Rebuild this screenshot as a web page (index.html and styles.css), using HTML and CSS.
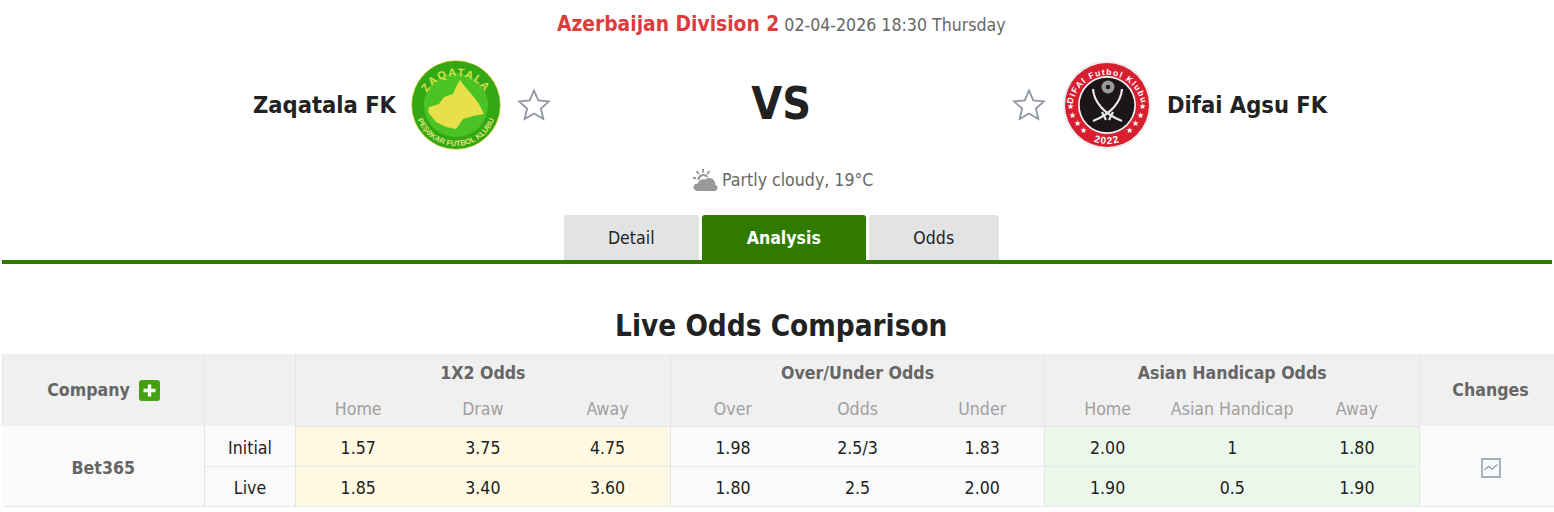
FILE: index.html
```html
<!DOCTYPE html>
<html lang="en">
<head>
    <meta charset="UTF-8">
    <meta name="viewport" content="width=device-width, initial-scale=1.0">
    <title>Zaqatala FK vs Difai Agsu FK</title>
    <link rel="stylesheet" href="styles.css">
</head>
<body>
    <div class="match-info">
        <span class="league">Azerbaijan Division 2</span>
        <span class="match-time">02-04-2026 18:30 Thursday</span>
    </div>

    <div class="teams">
        <div class="team team-home">
            <span class="team-name">Zaqatala FK</span>
            <svg class="logo" width="90" height="90" viewBox="0 0 90 90">
                <defs>
                    <path id="zaqTop" d="M11 50 A34 34 0 1 1 79 50"/>
                    <path id="zaqBottom" d="M4 45 A41 41 0 0 0 86 45"/>
                </defs>
                <circle cx="45" cy="45" r="44.7" fill="#e6d93f"/>
                <circle cx="45" cy="45" r="44" fill="#33a814"/>
                <circle cx="45" cy="45" r="32" fill="#4cc324"/>
                <path d="M49 20 L55 28 L62 36 L68 44 L73 54 L62 56 L52 59 L45 69 L35 67 L25 62 L17 52 L18 47 L28 44 L33 37 L42 34 L45 27 Z" fill="#e8e04a"/>
                <text class="zaq-top"><textPath href="#zaqTop" startOffset="50%" text-anchor="middle">ZAQATALA</textPath></text>
                <text class="zaq-bottom"><textPath href="#zaqBottom" startOffset="50%" text-anchor="middle">PEŞƏKAR FUTBOL KLUBU</textPath></text>
            </svg>
            <svg class="star" width="34" height="34" viewBox="0 0 34 34">
                <path d="M17 2.5 L21.3 12.4 L32 13.4 L23.9 20.5 L26.3 31 L17 25.5 L7.7 31 L10.1 20.5 L2 13.4 L12.7 12.4 Z"/>
            </svg>
        </div>
        <div class="vs">VS</div>
        <div class="team team-away">
            <svg class="star" width="34" height="34" viewBox="0 0 34 34">
                <path d="M17 2.5 L21.3 12.4 L32 13.4 L23.9 20.5 L26.3 31 L17 25.5 L7.7 31 L10.1 20.5 L2 13.4 L12.7 12.4 Z"/>
            </svg>
            <svg class="logo" width="90" height="90" viewBox="0 0 90 90">
                <defs>
                    <path id="difTop" d="M10 50 A35 35 0 1 1 80 50"/>
                    <path id="difBottom" d="M6 45 A39 39 0 0 0 84 45"/>
                </defs>
                <circle cx="45" cy="45" r="44" fill="#ececec"/>
                <circle cx="45" cy="45" r="42" fill="#d81f30"/>
                <circle cx="45" cy="45" r="29" fill="#f4f4f4"/>
                <circle cx="45" cy="45" r="27.3" fill="#1b1718"/>
                <circle cx="46" cy="27" r="6.5" fill="#9a9a9a"/>
                <circle cx="46" cy="27" r="2.2" fill="#1b1718"/>
                <path class="sabre" d="M31 29 C32 42 42 54 60 61"/>
                <path class="sabre" d="M60 29 C59 42 49 54 31 61"/>
                <path class="sabre" d="M51 52 L47 60 M40 52 L44 60"/>
                <text class="dif-top"><textPath href="#difTop" startOffset="50%" text-anchor="middle">DIFAI Futbol Klubu</textPath></text>
                <text class="dif-bottom"><textPath href="#difBottom" startOffset="50%" text-anchor="middle">2022</textPath></text>
                <text class="dif-star" x="5" y="49">★</text>
                <text class="dif-star" x="77" y="49">★</text>
                <text class="dif-star" x="7" y="58">★</text>
                <text class="dif-star" x="75" y="58">★</text>
                <text class="dif-star" x="12" y="66">★</text>
                <text class="dif-star" x="70" y="66">★</text>
                <text class="dif-star" x="18" y="73">★</text>
                <text class="dif-star" x="64" y="73">★</text>
            </svg>
            <span class="team-name">Difai Agsu FK</span>
        </div>
    </div>

    <div class="weather">
        <svg width="26" height="24" viewBox="0 0 26 24">
            <g class="sun-rays">
                <path d="M11 1 V4.5"/>
                <path d="M4.5 3 L6.8 6"/>
                <path d="M17.5 3 L15.2 6"/>
                <path d="M1 10 H4"/>
            </g>
            <path class="sun-arc" d="M6.5 12 A5 5 0 0 1 15.5 9"/>
            <path class="cloud" d="M6 23 C2.5 23 1 20.5 1.5 18.5 C2 16.5 4 15.5 5.5 16 C6.5 12.5 10 10.5 13.5 11.5 C15.5 9.5 20 9.5 22 12.5 C23 14 23.5 15.5 23 16.5 C25 17 26 19 25.5 20.5 C25 22.5 23.5 23 22 23 Z"/>
        </svg>
        <span>Partly cloudy, 19°C</span>
    </div>

    <div class="tabs">
        <a class="tab tab-detail">Detail</a>
        <a class="tab tab-analysis active">Analysis</a>
        <a class="tab tab-odds">Odds</a>
    </div>

    <h2 class="section-title">Live Odds Comparison</h2>

    <table class="odds-table">
        <colgroup>
            <col class="col-company">
            <col class="col-type">
            <col class="col-odd"><col class="col-odd"><col class="col-odd">
            <col class="col-odd"><col class="col-odd"><col class="col-odd">
            <col class="col-odd"><col class="col-odd"><col class="col-odd">
            <col class="col-changes">
        </colgroup>
        <thead>
            <tr class="head-top">
                <th rowspan="2">
                    <span class="company-head">Company
                        <svg width="21" height="21" viewBox="0 0 21 21">
                            <rect width="21" height="21" rx="3" fill="#45a012"/>
                            <path d="M10.5 4.5 V16.5 M4.5 10.5 H16.5" stroke="#fff" stroke-width="3.4"/>
                        </svg>
                    </span>
                </th>
                <th rowspan="2"></th>
                <th colspan="3">1X2 Odds</th>
                <th colspan="3">Over/Under Odds</th>
                <th colspan="3">Asian Handicap Odds</th>
                <th rowspan="2">Changes</th>
            </tr>
            <tr class="head-sub">
                <th>Home</th><th>Draw</th><th class="group-end">Away</th>
                <th>Over</th><th>Odds</th><th class="group-end">Under</th>
                <th>Home</th><th>Asian Handicap</th><th class="group-end">Away</th>
            </tr>
        </thead>
        <tbody>
            <tr>
                <td class="company" rowspan="2">Bet365</td>
                <td class="type">Initial</td>
                <td class="yellow">1.57</td><td class="yellow">3.75</td><td class="yellow group-end">4.75</td>
                <td>1.98</td><td>2.5/3</td><td class="group-end">1.83</td>
                <td class="green">2.00</td><td class="green">1</td><td class="green group-end">1.80</td>
                <td class="changes" rowspan="2">
                    <svg width="20" height="20" viewBox="0 0 20 20">
                        <rect x="1" y="1" width="18" height="18" fill="none" stroke="#8c99a3" stroke-width="1.5"/>
                        <path d="M3.5 12 L7.5 8.5 L11 11 L16.5 6.5" fill="none" stroke="#8c99a3" stroke-width="1.2"/>
                    </svg>
                </td>
            </tr>
            <tr>
                <td class="type">Live</td>
                <td class="yellow">1.85</td><td class="yellow">3.40</td><td class="yellow group-end">3.60</td>
                <td>1.80</td><td>2.5</td><td class="group-end">2.00</td>
                <td class="green">1.90</td><td class="green">0.5</td><td class="green group-end">1.90</td>
            </tr>
        </tbody>
    </table>
</body>
</html>
```

FILE: styles.css
```css
* {
    box-sizing: border-box;
}
body {
    margin: 0;
    padding: 0 2px;
    background: #fff;
    color: #222;
    font-family: "DejaVu Sans Condensed", "DejaVu Sans", sans-serif;
    font-stretch: condensed;
    font-size: 17.6px;
    overflow: hidden;
}
.match-info {
    height: 48px;
    padding: 10px 0 0 8.5px;
    text-align: center;
    color: #666;
    line-height: 28px;
}
.league {
    color: #dc3c3c;
    font-size: 20.8px;
    font-weight: bold;
}
.teams {
    display: flex;
    align-items: center;
    height: 113px;
    padding-left: 8.5px;
}
.team {
    display: flex;
    flex: 1;
    align-items: center;
}
.team-home {
    justify-content: flex-end;
}
.team-name {
    font-size: 23.5px;
    font-weight: bold;
    color: #222;
}
.team-home .logo {
    margin: 0 15.5px 0 15px;
}
.team-away .logo {
    margin: 0 15px 0 16px;
}
.star {
    flex: none;
}
.star path {
    fill: #fff;
    stroke: #8f96a0;
    stroke-width: 1.8;
}
.vs {
    width: 461.5px;
    margin-top: -2px;
    text-align: center;
    font-size: 44.5px;
    font-weight: bold;
    color: #222;
}
.zaq-top {
    font: bold 11px "Liberation Sans", sans-serif;
    fill: #d8e04a;
    letter-spacing: 1.4px;
}
.zaq-bottom {
    font: bold 7.6px "Liberation Sans", sans-serif;
    fill: #dfe27a;
}
.dif-top {
    font: bold 8.5px "Liberation Sans", sans-serif;
    fill: #fff;
    letter-spacing: 1.2px;
}
.dif-bottom {
    font: bold 10px "Liberation Sans", sans-serif;
    fill: #fff;
    letter-spacing: 1.2px;
}
.dif-star {
    font: 8px "DejaVu Sans", sans-serif;
    fill: #fff;
}
.sabre {
    fill: none;
    stroke: #e8e8e8;
    stroke-width: 2.2;
}
.weather {
    display: flex;
    justify-content: center;
    align-items: center;
    gap: 4px;
    height: 36px;
    padding: 1px 0 0 11.5px;
    color: #666;
}
.sun-rays path,
.sun-arc {
    fill: none;
    stroke: #999;
    stroke-width: 2;
}
.cloud {
    fill: #999;
}
.tabs {
    display: flex;
    justify-content: center;
    gap: 3px;
    height: 49px;
    margin-top: 18px;
    padding-left: 8.5px;
    border-bottom: 4px solid #317a00;
}
.tab {
    display: block;
    height: 45px;
    padding-top: 1px;
    line-height: 45px;
    text-align: center;
    background: #e3e3e3;
    border-radius: 3px 3px 0 0;
    color: #222;
}
.tab-detail {
    width: 135px;
}
.tab-analysis {
    width: 164px;
}
.tab-odds {
    width: 130px;
}
.tab.active {
    background: #317a00;
    color: #fff;
    font-weight: bold;
}
.section-title {
    margin: 0;
    height: 90px;
    padding: 44px 0 0 8.5px;
    text-align: center;
    font-size: 29.4px;
    line-height: 36px;
    font-weight: bold;
    color: #222;
}
.odds-table {
    width: 1559px;
    table-layout: fixed;
    border-collapse: collapse;
}
.col-company {
    width: 202px;
}
.col-type {
    width: 91px;
}
.col-odd {
    width: 124.9px;
}
.col-changes {
    width: 141.9px;
}
.odds-table th {
    background: #f0f0f0;
    border: 1px solid #e4e4e4;
    border-top: 0;
    color: #666;
    font-weight: bold;
    padding: 0;
}
.odds-table tr:first-child th {
    border-bottom: 0;
}
.head-top th {
    height: 37px;
}
.head-sub th {
    height: 35px;
    padding-top: 1px;
    font-weight: normal;
    color: #a0a0a0;
    border-left: 0;
    border-right: 0;
    border-top: 0;
}
.head-sub th.group-end {
    border-right: 1px solid #e4e4e4;
}
.company-head {
    display: inline-flex;
    align-items: center;
    gap: 9px;
}
.odds-table td {
    height: 40px;
    padding: 4px 0 0;
    text-align: center;
    border-bottom: 1px solid #e8e8e8;
    color: #222;
    background: #fafafa;
}
.odds-table td.group-end {
    border-right: 1px solid #e4e4e4;
}
.odds-table td.company {
    font-weight: bold;
    color: #666;
    border-right: 1px solid #e4e4e4;
}
.odds-table td.type {
    border-right: 1px solid #e4e4e4;
}
.odds-table td.yellow {
    background: #fef9e3;
}
.odds-table td.green {
    background: #edf8ed;
}
.changes svg {
    display: block;
    margin: 0 auto;
}
```
